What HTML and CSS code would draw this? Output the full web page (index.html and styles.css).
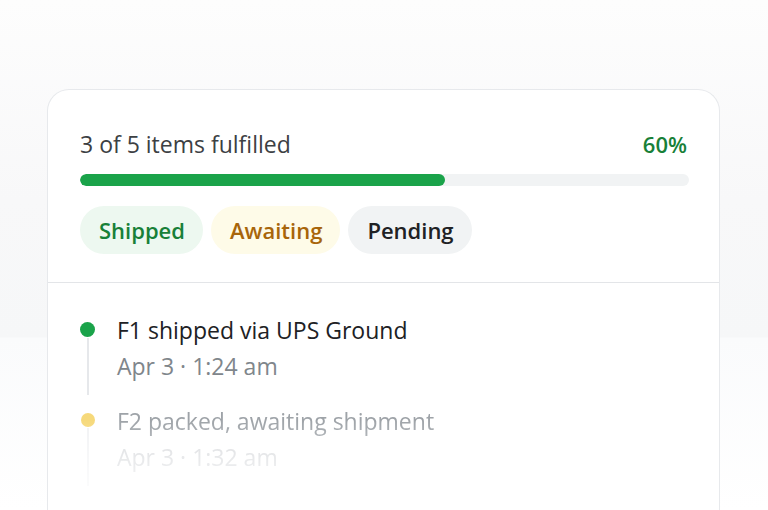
FILE: index.html
```html
<!DOCTYPE html>
<html>
<head>
<meta charset="utf-8">
<link rel="stylesheet" href="styles.css">
</head>
<body>
<div class="page">
  <div class="card">
    <div class="summary">
      <div class="summary-row">
        <span class="summary-label">3 of 5 items fulfilled</span>
        <span class="summary-pct">60%</span>
      </div>
      <div class="track"><div class="fill" style="width:60%"></div></div>
      <div class="chips">
        <span class="chip chip-shipped">Shipped</span>
        <span class="chip chip-awaiting">Awaiting</span>
        <span class="chip chip-pending">Pending</span>
      </div>
    </div>
    <div class="timeline">
      <div class="event">
        <div class="rail"><span class="dot dot-green"></span><span class="line"></span></div>
        <div class="event-body">
          <div class="event-title">F1 shipped via UPS Ground</div>
          <div class="event-time">Apr 3 · 1:24 am</div>
        </div>
      </div>
      <div class="event event-faded">
        <div class="rail"><span class="dot dot-yellow"></span><span class="line line-faint"></span></div>
        <div class="event-body">
          <div class="event-title">F2 packed, awaiting shipment</div>
          <div class="event-time">Apr 3 · 1:32 am</div>
        </div>
      </div>
    </div>
    <div class="fade"></div>
  </div>
</div>
</body>
</html>
```
FILE: styles.css
```css
* { box-sizing: border-box; }
html, body { margin: 0; padding: 0; }
body {
  width: 768px;
  height: 510px;
  overflow: hidden;
  font-family: "Open Sans", "Liberation Sans", sans-serif;
  background: linear-gradient(180deg, #fdfdfd 0px, #f8f8f9 200px, #f6f7f8 337px, #fafbfc 338px, #ffffff 510px);
}
.page {
  padding: 89px 48px 0 47px;
  height: 510px;
}
.card {
  position: relative;
  background: #ffffff;
  border: 1px solid #e7e9ec;
  border-bottom: none;
  border-radius: 22px 22px 0 0;
  height: 421px;
  overflow: hidden;
}
.summary {
  padding: 39px 30px 28px 32px;
  border-bottom: 1px solid #e3e5e8;
}
.summary-row {
  display: flex;
  justify-content: space-between;
  align-items: center;
  height: 30px;
  font-size: 23px;
  padding-right: 2px;
}
.summary-label { color: #3c4043; }
.summary-pct { color: #188038; font-weight: 600; font-size: 22px; }
.track {
  margin-top: 15px;
  height: 12px;
  background: #f1f3f4;
  border-radius: 6px;
  overflow: hidden;
}
.fill {
  height: 100%;
  background: #1aa34a;
  border-radius: 6px;
}
.chips {
  display: flex;
  gap: 8px;
  margin-top: 20px;
}
.chip {
  height: 48px;
  display: flex;
  align-items: center;
  padding: 0 18px 0 19px;
  border-radius: 24px;
  font-size: 22px;
  font-weight: 600;
}
.chip-shipped { background: #edf8f0; color: #188038; }
.chip-awaiting { background: #fefbe8; color: #a8650a; }
.chip-pending { background: #f1f3f4; color: #202124; }
.timeline {
  padding: 32px 32px 0 32px;
}
.event {
  display: flex;
  gap: 22px;
}
.rail {
  width: 15px;
  display: flex;
  flex-direction: column;
  align-items: center;
  padding-top: 7px;
}
.dot {
  width: 15px;
  height: 15px;
  border-radius: 50%;
  flex: none;
}
.dot-green { background: #1aa34a; }
.dot-yellow { background: #f4d264; width: 14px; height: 14px; }
.line {
  width: 2px;
  flex: 1;
  background: #e6e8eb;
  margin-top: 1px;
  margin-bottom: 11px;
}
.line-faint { background: #f1f2f4; }
.event-body { padding-bottom: 25px; }
.event-title {
  font-size: 23px;
  line-height: 30px;
  color: #202124;
}
.event-time {
  margin-top: 6px;
  font-size: 23px;
  line-height: 30px;
  color: #80868b;
}
.event-faded .event-title { color: #9ea3a8; }
.event-faded .event-time { color: #d7d9dc; }
.event-faded .dot { opacity: 0.85; }
.event-faded {
  filter: blur(0.6px);
}
.fade {
  position: absolute;
  left: 0;
  right: 0;
  bottom: 0;
  height: 90px;
  background: linear-gradient(180deg, rgba(255,255,255,0) 0%, rgba(255,255,255,0.5) 50%, rgba(255,255,255,0.95) 100%);
}
```
